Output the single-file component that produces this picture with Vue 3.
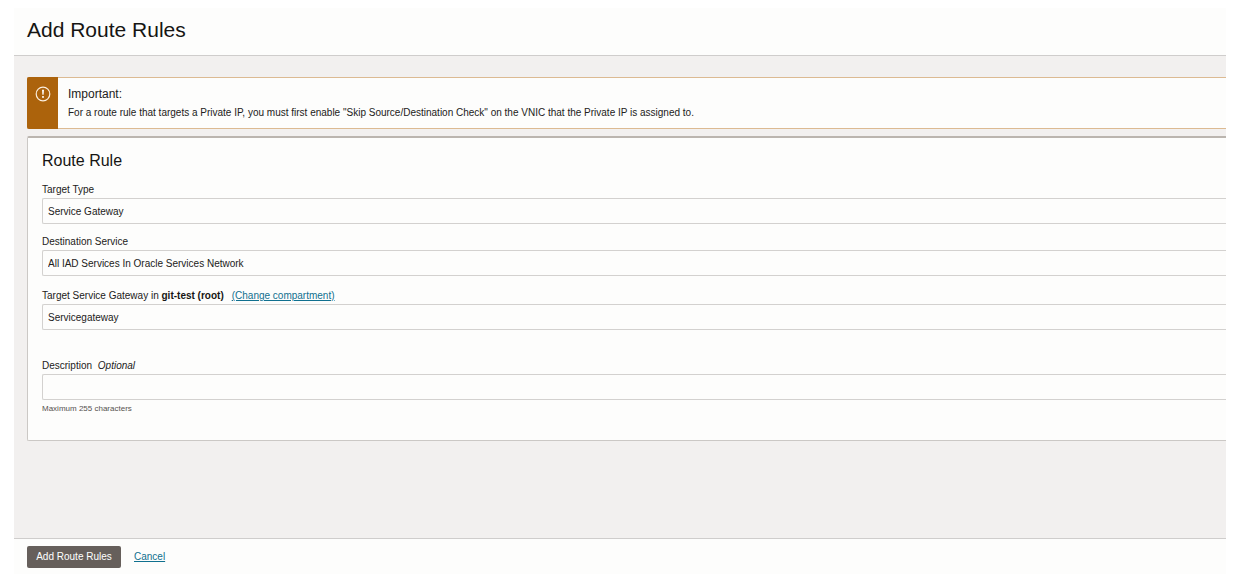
<script setup>
import { ref } from 'vue'

const targetType = ref('Service Gateway')
const service = ref('All IAD Services In Oracle Services Network')
const gateway = ref('Servicegateway')
const description = ref('')
</script>

<template>
  <form class="dialog" @submit.prevent>
    <header class="header">
      <h1>Add Route Rules</h1>
    </header>

    <main class="body">
      <section class="notice">
        <div class="notice-mark">
          <svg width="16" height="16" viewBox="0 0 16 16" fill="none" aria-hidden="true">
            <circle cx="8" cy="8" r="6.8" stroke="#fbeedd" stroke-width="1.2" />
            <path d="M7 3.8h2l-.4 5H7.4z" fill="#fff" />
            <rect x="7.1" y="10.1" width="1.8" height="1.7" fill="#fff" />
          </svg>
        </div>
        <div class="notice-text">
          <h2>Important:</h2>
          <p>For a route rule that targets a Private IP, you must first enable "Skip Source/Destination Check" on the VNIC that the Private IP is assigned to.</p>
        </div>
      </section>

      <section class="card">
        <h2>Route Rule</h2>

        <div class="field">
          <div class="label"><label for="target-type">Target Type</label></div>
          <select id="target-type" v-model="targetType" class="control">
            <option>Service Gateway</option>
          </select>
        </div>

        <div class="field">
          <div class="label"><label for="service">Destination Service</label></div>
          <select id="service" v-model="service" class="control">
            <option>All IAD Services In Oracle Services Network</option>
          </select>
        </div>

        <div class="field gateway">
          <div class="label">
            <label for="gateway">Target Service Gateway in <b>git-test (root)</b></label>
            <a class="compartment" href="#">(Change compartment)</a>
          </div>
          <select id="gateway" v-model="gateway" class="control">
            <option>Servicegateway</option>
          </select>
        </div>

        <div class="field description">
          <div class="label">
            <label for="description">Description <i>Optional</i></label>
          </div>
          <input id="description" v-model="description" class="control" type="text" maxlength="255" aria-describedby="hint" />
          <p id="hint" class="hint">Maximum 255 characters</p>
        </div>
      </section>
    </main>

    <footer class="footer">
      <button type="submit">Add Route Rules</button>
      <a href="#">Cancel</a>
    </footer>
  </form>
</template>

<style>
body {
  background: #fff;
}
</style>

<style scoped>
.dialog {
  box-sizing: border-box;
  min-height: 100vh;
  padding: 8px 19px 0 14px;
  display: flex;
  flex-direction: column;
  font-family: "Liberation Sans", Arial, sans-serif;
  font-size: 10px;
  line-height: 14px;
  color: #222120;
}

h1,
h2,
p {
  margin: 0;
  font-weight: 400;
}

a {
  color: #10708f;
  text-decoration: underline;
}

.header {
  padding: 9px 13px 12px;
  background: #fdfdfc;
  border-bottom: 1px solid #cfcdcc;
}

.header h1 {
  font-size: 21px;
  line-height: 26px;
  color: #161513;
}

.body {
  flex: 1;
  padding: 21px 0 21px 13px;
  background: #f2f0ef;
}

.notice {
  display: flex;
  border: 1px solid #dcba92;
  border-right: 0;
  border-radius: 2px 0 0 2px;
  background: #fdfdfc;
}

.notice-mark {
  flex: none;
  width: 31px;
  margin: -1px 0 -1px -1px;
  padding-top: 9px;
  box-sizing: border-box;
  text-align: center;
  background: #ac630c;
  border-radius: 2px 0 0 2px;
}

.notice-text {
  padding: 7px 10px;
}

.notice-text h2 {
  margin-bottom: 2px;
  font-size: 12px;
  line-height: 18px;
}

.notice-text p {
  line-height: 16px;
}

.card {
  margin-top: 7px;
  padding: 13px 0 24px 14px;
  background: #fdfdfc;
  border: 1px solid #cbc8c5;
  border-top: 2px solid #bbb5af;
  border-right: 0;
  border-radius: 2px 0 0 2px;
}

.card h2 {
  margin-bottom: 12px;
  font-size: 16px;
  line-height: 20px;
  color: #161513;
}

.field + .field {
  margin-top: 11px;
}

.field + .gateway {
  margin-top: 13px;
}

.field + .description {
  margin-top: 29px;
}

.label {
  margin-bottom: 1px;
}

.label b {
  color: #161513;
}

.label i {
  margin-left: 3px;
}

.compartment {
  margin-left: 8px;
}

.control {
  display: block;
  box-sizing: border-box;
  width: 100%;
  height: 26px;
  margin: 0;
  padding: 1px 5px 0;
  appearance: none;
  border: 1px solid #d3d1cf;
  border-right: 0;
  border-radius: 2px 0 0 2px;
  background: #fdfdfc;
  color: #222120;
  font: inherit;
}

.hint {
  margin-top: 2px;
  font-size: 8px;
  color: #56524f;
}

.footer {
  display: flex;
  align-items: center;
  gap: 13px;
  padding: 7px 13px 6px;
  background: #fdfdfc;
  border-top: 1px solid #cfcdcc;
}

.footer button {
  min-width: 94px;
  height: 22px;
  padding: 0 8px;
  border: 0;
  border-radius: 2px;
  background: #665f5b;
  color: #fff;
  font: inherit;
}
</style>
